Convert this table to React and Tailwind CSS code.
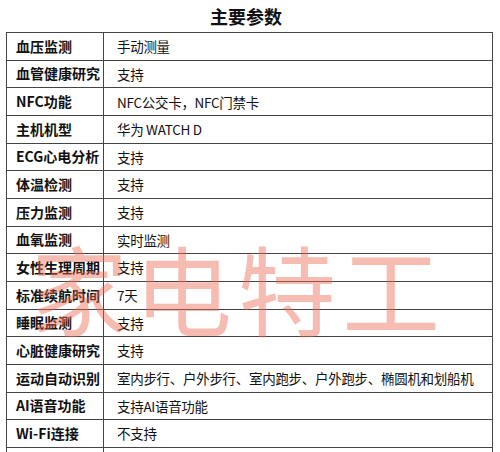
const rows = [
  ["血压监测", "手动测量"],
  ["血管健康研究", "支持"],
  ["NFC功能", "NFC公交卡，NFC门禁卡"],
  ["主机机型", "华为 WATCH D"],
  ["ECG心电分析", "支持"],
  ["体温检测", "支持"],
  ["压力监测", "支持"],
  ["血氧监测", "实时监测"],
  ["女性生理周期", "支持"],
  ["标准续航时间", "7天"],
  ["睡眠监测", "支持"],
  ["心脏健康研究", "支持"],
  ["运动自动识别", "室内步行、户外步行、室内跑步、户外跑步、椭圆机和划船机"],
  ["AI语音功能", "支持AI语音功能"],
  ["Wi-Fi连接", "不支持"],
  ["", ""],
];

export default function App() {
  return (
    <div
      className="relative w-[500px] h-[452px] overflow-hidden bg-white text-[#111]"
      style={{ fontFamily: '"Noto Sans CJK SC", "Noto Sans", sans-serif' }}
    >
      {/* Title */}
      <div className="h-[32px] flex items-center justify-center pr-[8px] text-[18px] font-bold leading-none">
        主要参数
      </div>

      {/* Spec table */}
      <div className="ml-[6px] w-[487px] border-t border-l border-r border-[#444]">
        {rows.map(([label, value], i) => (
          <div key={i} className="flex h-[27.67px] border-b border-[#444]">
            <div className="w-[97px] shrink-0 border-r border-[#444] pl-[9px] flex items-center text-[14px] font-bold whitespace-nowrap">
              {label}
            </div>
            <div className="flex-1 min-w-0 pl-[13px] flex items-center text-[13.5px] tracking-[-0.3px] whitespace-nowrap overflow-hidden">
              {value}
            </div>
          </div>
        ))}
      </div>

      {/* Watermark */}
      <div className="pointer-events-none absolute left-0 right-0 top-[236px] h-[100px] flex items-center justify-center pr-[24px] text-[98px] leading-none font-normal text-[#ec6a52]/45 tracking-[6px]">
        家电特工
      </div>
    </div>
  );
}
